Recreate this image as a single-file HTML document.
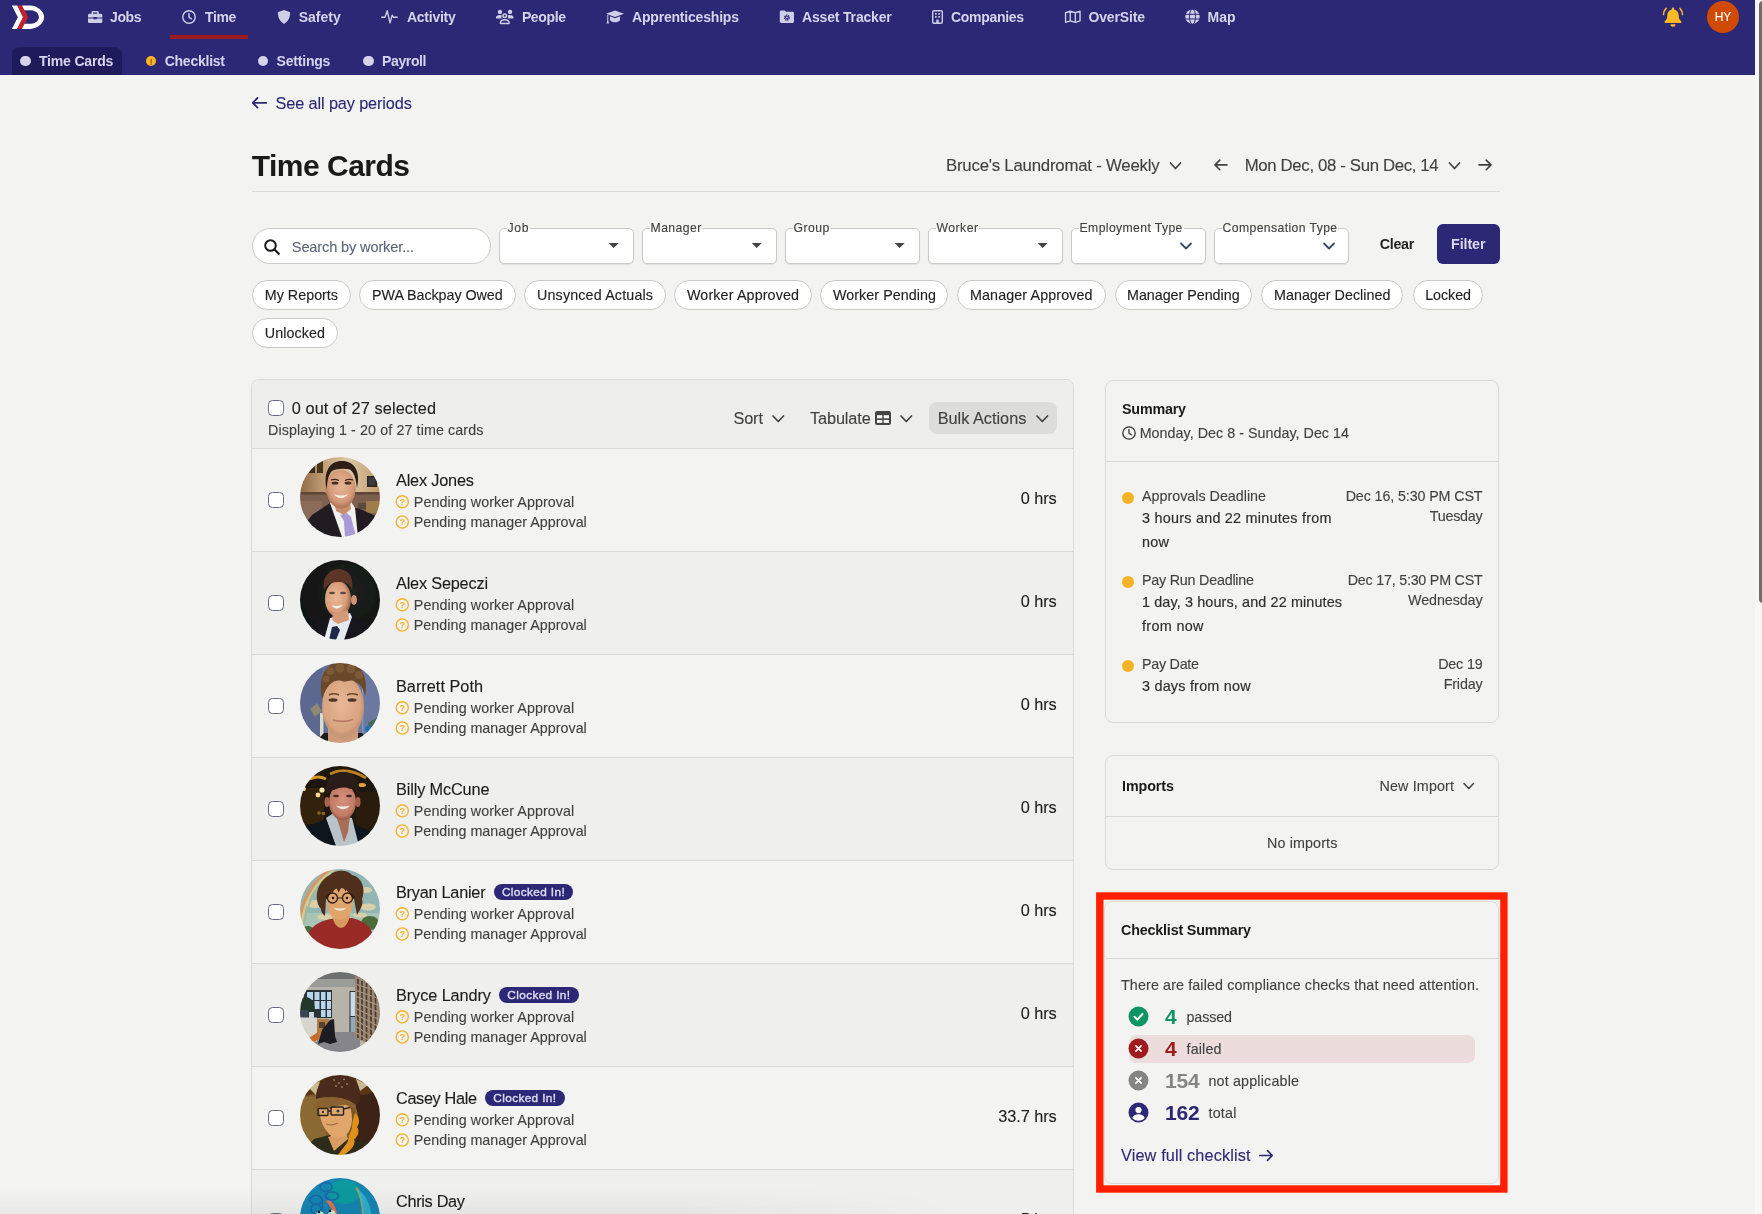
<!DOCTYPE html>
<html lang="en"><head><meta charset="utf-8"><title>Time Cards</title>
<style>
*{box-sizing:border-box;margin:0;padding:0}
html,body{width:1762px;height:1214px;overflow:hidden}
body{background:#f3f3f1;font-family:"Liberation Sans",sans-serif;position:relative;color:#222}
#app{position:absolute;left:0;top:0;width:1762px;height:1214px;overflow:hidden;will-change:transform}
.t{position:absolute;white-space:nowrap;line-height:1.2;display:block;-webkit-text-stroke:.12px currentColor}
.b{-webkit-text-stroke:0}
.abs,svg.i{position:absolute;overflow:visible}
nav.top{position:absolute;left:0;top:0;width:1755px;height:75px;background:#2d2876}
.tabbg{position:absolute;left:12px;top:47px;width:110px;height:28px;background:#1f1b5b;border-radius:7px 7px 0 0}
.dot{position:absolute;width:10.6px;height:10.6px;border-radius:50%;background:#d5d4eb}
.uline{position:absolute;left:170px;top:35px;width:78px;height:4px;background:#9b1c1f}
.sb-track{position:absolute;left:1755px;top:0;width:7px;height:1214px;background:#f7f7f5}
.sb-thumb{position:absolute;left:1759px;top:1px;width:8px;height:602px;background:#6d6d6b;border-radius:4px}
.hr{position:absolute;height:1px;background:#d8d8d6}
.search{position:absolute;left:252px;top:228px;width:239px;height:36px;border:1px solid #c9c9c7;border-radius:18px;background:#fff}
.sel{position:absolute;top:228px;width:135px;height:36px;border:1px solid #c9c9c7;border-radius:5px;background:#fff;box-shadow:0 1px 1px rgba(0,0,0,.08)}
.notch{position:absolute;top:228px;height:1px;background:#f9f9f8}
.chip{position:absolute;height:30px;border:1px solid #c9c9c7;border-radius:15px;background:#fff}
.btn-filter{position:absolute;left:1437px;top:224px;width:63px;height:40px;border-radius:6px;background:#2d2876}
.card{position:absolute;border:1px solid #dadad8;border-radius:8px;background:#f3f3f1;overflow:hidden}
.row{position:absolute;left:0;width:820px;height:103px;border-top:1px solid #d9d9d7}
.cb{position:absolute;width:16px;height:16px;border:1px solid #636a88;border-radius:4.5px;background:#fff}
.av{position:absolute;left:47px;top:9px;width:80px;height:80px;border-radius:50%;overflow:hidden}
.badge{position:absolute;height:16px;border-radius:8px;background:#2d2876}
.bulk{position:absolute;left:929px;top:402px;width:128px;height:32px;border-radius:8px;background:#dcdcda}
.ydot{position:absolute;width:12px;height:12px;border-radius:50%;background:#f9b325}
.failbg{position:absolute;left:1129px;top:1035px;width:346px;height:28px;border-radius:7px;background:#ecdcdb}
.redbox{position:absolute;left:1097px;top:893px;width:411px;height:300px;border:5px solid #fb2007}
.shade{position:absolute;left:0;top:1186px;width:960px;height:28px;background:linear-gradient(rgba(0,0,0,0),rgba(0,0,0,.02) 60%,rgba(0,0,0,.045));-webkit-mask-image:linear-gradient(to right,#000 0,#000 70%,transparent 100%);mask-image:linear-gradient(to right,#000 0,#000 70%,transparent 100%)}
</style></head>
<body>
<div id="app">
<nav class="top">
<svg class="i" style="left:11px;top:5px" width="32.5" height="23.4" viewBox="0 0 32.500 23.400" ><g transform="translate(0.80 0.50)"><path fill="#fff" d="M0 0H5.500L11.300 11.700L5.300 23.400H0L6.100 11.700z"/><path fill="#c52127" d="M5.500 0H10.200L16.400 11.400L10.100 23.400H5.300L11.300 11.700z"/><path fill="#fff" d="M10.200 0H18.500C25.500 .3 32.300 5.600 32.300 11.700C32.300 17.800 25.500 23.100 18.500 23.400H10.100L12.800 18.300H19.300C23.500 18.100 27.100 15.200 27.100 11.500C27.100 7.800 23.500 4.900 19.300 4.700H12.700z"/></g></svg>
<svg class="i" style="left:88px;top:11px" width="14.3" height="12" viewBox="0 0 15 13" preserveAspectRatio="none"><g transform="translate(0.00 0.11)"><path fill="#cfcee8" d="M5 0h5a1.3 1.3 0 0 1 1.3 1.3V3H13.5A1.5 1.5 0 0 1 15 4.5V7H9.2v-.6H5.8V7H0V4.5A1.5 1.5 0 0 1 1.500 3H3.700V1.300A1.300 1.300 0 0 1 5 0zm.3 1.500V3h4.400V1.500zM0 8h5.800v.9h3.400V8H15v3.500A1.500 1.500 0 0 1 13.500 13h-12A1.500 1.500 0 0 1 0 11.500z"/></g></svg>
<span class="t b" style="left:110px;top:8px;line-height:18px;font-size:14px;font-weight:700;color:#d5d4eb;letter-spacing:-0.362px;">Jobs</span>
<svg class="i" style="left:182px;top:10px" width="14" height="14" viewBox="0 0 14 14" ><circle cx="7" cy="7" r="6.2" fill="none" stroke="#cfcee8" stroke-width="1.4"/><path d="M7 3.400V7.200L9.400 8.800" fill="none" stroke="#cfcee8" stroke-width="1.4" stroke-linecap="round" stroke-linejoin="round"/></svg>
<span class="t b" style="left:205px;top:8px;line-height:18px;font-size:14px;font-weight:700;color:#d5d4eb;letter-spacing:-0.346px;">Time</span>
<svg class="i" style="left:277px;top:10px" width="14" height="14" viewBox="0 0 14 14" ><path fill="#cfcee8" d="M7 0L13.200 2.300C13.200 8 10.500 12 7 14C3.500 12 .8 8 .8 2.300z"/></svg>
<span class="t b" style="left:298.7px;top:8px;line-height:18px;font-size:14px;font-weight:700;color:#d5d4eb;letter-spacing:-0.006px;">Safety</span>
<svg class="i" style="left:381px;top:9px" width="17" height="14.5" viewBox="0 0 17 14.500" ><g transform="translate(0.00 0.50)"><path fill="none" stroke="#cfcee8" stroke-width="1.350" stroke-linecap="round" stroke-linejoin="round" d="M.7 7.700H4L6.200 1.200L9 13.300L11.200 5.600L12.300 7.700H16.300"/></g></svg>
<span class="t b" style="left:407px;top:8px;line-height:18px;font-size:14px;font-weight:700;color:#d5d4eb;letter-spacing:-0.268px;">Activity</span>
<svg class="i" style="left:495px;top:9px" width="18.5" height="15" viewBox="0 0 18.500 15" ><g transform="translate(0.50 0.50)"><g fill="#cfcee8"><circle cx="4.470" cy="2.400" r="2.200"/><circle cx="14.530" cy="2.400" r="2.200"/><path d="M.4 8.300C.5 6.300 2.100 5.400 4.200 5.400C5.200 5.400 6 5.700 6.500 6.100C5.900 6.900 5.800 8 6 9H1C.6 9 .4 8.700 .4 8.300z"/><path d="M18.100 8.300C18 6.300 16.400 5.400 14.300 5.400C13.300 5.400 12.500 5.700 12 6.100C12.600 6.900 12.700 8 12.500 9H17.500C17.900 9 18.100 8.700 18.100 8.300z"/></g><circle cx="9.200" cy="6.300" r="1.750" fill="none" stroke="#cfcee8" stroke-width="1.500"/><path d="M4.900 13.400C5 11.200 6.800 10.300 9.250 10.300C11.700 10.300 13.500 11.200 13.600 13.400C13.600 13.700 13.400 13.900 13.100 13.900H5.400C5.100 13.900 4.900 13.700 4.900 13.400z" fill="none" stroke="#cfcee8" stroke-width="1.500" stroke-linejoin="round"/></g></svg>
<span class="t b" style="left:521.9px;top:8px;line-height:18px;font-size:14px;font-weight:700;color:#d5d4eb;letter-spacing:-0.361px;">People</span>
<svg class="i" style="left:606px;top:10px" width="18" height="14" viewBox="0 0 18 14" ><g fill="#cfcee8"><path d="M9 .5L18 3.800L9 7.100L0 3.800z"/><path d="M4 6.300L9 8.200L14 6.300V10.200C12.800 11.600 10.800 12.300 9 12.300S5.200 11.600 4 10.200z"/><path d="M1.300 4.800h1v5.500l.7 3.200H.6l.7-3.200z"/></g></svg>
<span class="t b" style="left:632px;top:8px;line-height:18px;font-size:14px;font-weight:700;color:#d5d4eb;letter-spacing:-0.193px;">Apprenticeships</span>
<svg class="i" style="left:779px;top:10px" width="14.2" height="12.7" viewBox="0 0 15 13" preserveAspectRatio="none"><g transform="translate(0.85 0.41)"><path fill="#cfcee8" d="M1.500 0H5.200L6.700 1.500H13.500A1.500 1.500 0 0 1 15 3V11.500A1.500 1.500 0 0 1 13.500 13H1.500A1.500 1.500 0 0 1 0 11.500V1.500A1.500 1.500 0 0 1 1.500 0z"/><circle cx="7.500" cy="7.400" r="2.300" fill="none" stroke="#2d2876" stroke-width="1.700" stroke-dasharray="1.200 .6"/><circle cx="7.500" cy="7.400" r="1.700" fill="#2d2876"/><circle cx="7.500" cy="7.400" r=".9" fill="#cfcee8"/></g></svg>
<span class="t b" style="left:802px;top:8px;line-height:18px;font-size:14px;font-weight:700;color:#d5d4eb;letter-spacing:-0.170px;">Asset Tracker</span>
<svg class="i" style="left:932px;top:10px" width="11" height="14" viewBox="0 0 11 14" ><rect x=".7" y=".7" width="9.600" height="12.600" rx="1.400" fill="none" stroke="#cfcee8" stroke-width="1.400"/><g fill="#cfcee8"><rect x="3" y="3" width="1.700" height="1.700"/><rect x="6.300" y="3" width="1.700" height="1.700"/><rect x="3" y="6" width="1.700" height="1.700"/><rect x="6.300" y="6" width="1.700" height="1.700"/><rect x="4.300" y="9.600" width="2.400" height="3.400"/></g></svg>
<span class="t b" style="left:951px;top:8px;line-height:18px;font-size:14px;font-weight:700;color:#d5d4eb;letter-spacing:-0.309px;">Companies</span>
<svg class="i" style="left:1064px;top:10px" width="16" height="12.6" viewBox="0 0 17 13" preserveAspectRatio="none"><g transform="translate(0.85 0.52)"><path fill="none" stroke="#cfcee8" stroke-width="1.450" stroke-linejoin="round" d="M.8 2.300L5.800 .8L11.200 2.300L16.200 .8V10.700L11.200 12.200L5.800 10.700L.8 12.200zM5.800 .8V10.700M11.200 2.300V12.200"/></g></svg>
<span class="t b" style="left:1088.5px;top:8px;line-height:18px;font-size:14px;font-weight:700;color:#d5d4eb;letter-spacing:-0.156px;">OverSite</span>
<svg class="i" style="left:1185px;top:9px" width="15" height="15" viewBox="0 0 15 15" ><g transform="translate(0.00 0.20)"><circle cx="7.500" cy="7.500" r="7.200" fill="#cfcee8"/><g fill="none" stroke="#2d2876" stroke-width="1"><ellipse cx="7.500" cy="7.500" rx="3" ry="7.600"/><path d="M0 5.100H15M0 9.800H15"/></g></g></svg>
<span class="t b" style="left:1207.5px;top:8px;line-height:18px;font-size:14px;font-weight:700;color:#d5d4eb;">Map</span>
<div class="uline"></div>
<svg class="i" style="left:1662px;top:7px" width="21" height="21" viewBox="0 0 21 21" ><g transform="translate(0.50 0.00)"><g fill="#fbb924"><path d="M10.500 .6c.7 0 1.200.5 1.200 1.200v.6c2.800.6 4.500 2.900 4.500 5.800 0 3 .9 4.700 2.500 6 .6.500.3 1.700-.7 1.700H3c-1 0-1.300-1.200-.7-1.700C3.900 12.900 4.800 11.200 4.800 8.200c0-2.900 1.700-5.200 4.500-5.800V1.800c0-.7.500-1.200 1.200-1.200z"/><path d="M8 17.200h5a2.500 2.500 0 0 1-5 0z"/></g><g fill="none" stroke="#fbb924" stroke-width="1.500" stroke-linecap="round"><path d="M3.600 1.400C2 3 1.100 5.200 1 7.600"/><path d="M17.400 1.400c1.600 1.600 2.500 3.800 2.600 6.200"/></g></g></svg>
<div class="abs" style="left:1707px;top:1px;width:32px;height:32px;border-radius:50%;background:#d04a02"></div>
<span class="t " style="left:1714.8px;top:9px;line-height:16px;font-size:12px;color:#fff;letter-spacing:-0.272px;">HY</span>
<div class="tabbg"></div>
<div class="dot" style="left:20px;top:55.800px"></div>
<span class="t b" style="left:39px;top:52px;line-height:18px;font-size:14px;font-weight:700;color:#d5d4eb;letter-spacing:-0.178px;">Time Cards</span>
<div class="dot" style="left:145.7px;top:55.800px;background:#f9b325"></div>
<span class="t b" style="left:164.7px;top:52px;line-height:18px;font-size:14px;font-weight:700;color:#d5d4eb;letter-spacing:-0.244px;">Checklist</span>
<div class="dot" style="left:257.9px;top:55.800px"></div>
<span class="t b" style="left:276.5px;top:52px;line-height:18px;font-size:14px;font-weight:700;color:#d5d4eb;letter-spacing:-0.191px;">Settings</span>
<div class="dot" style="left:363px;top:55.800px"></div>
<span class="t b" style="left:382px;top:52px;line-height:18px;font-size:14px;font-weight:700;color:#d5d4eb;letter-spacing:-0.367px;">Payroll</span>
<span class="t b" style="left:149.7px;top:56px;line-height:12px;font-size:8.5px;font-weight:700;color:#8a5a00;">!</span>
</nav>
<div class="sb-track"></div><div class="sb-thumb"></div>
<main>
<svg class="i" style="left:251px;top:96px" width="15.6" height="12" viewBox="0 0 15.6 12" ><g transform="translate(0.70 0.80)"><path d="M14.6 6H1.200M5.800 1.200L1 6L5.800 10.800" fill="none" stroke="#2d2876" stroke-width="1.8" stroke-linecap="round" stroke-linejoin="round"/></g></svg>
<span class="t " style="left:275.6px;top:93px;line-height:20px;font-size:16.3px;color:#2d2876;letter-spacing:-0.127px;">See all pay periods</span>
<span class="t b" style="left:251.7px;top:148px;line-height:35px;font-size:30px;font-weight:700;color:#1a1a1a;letter-spacing:0.071px;letter-spacing:-0.5px;">Time Cards</span>
<span class="t " style="left:946px;top:155px;line-height:21px;font-size:16.8px;color:#414141;letter-spacing:-0.215px;">Bruce's Laundromat - Weekly</span>
<svg class="i" style="left:1169px;top:162px" width="12" height="7.5" viewBox="0 0 12 7.5" ><g transform="translate(0.50 0.00)"><path d="M1 1L6.0 6.5L11 1" fill="none" stroke="#414141" stroke-width="1.7" stroke-linecap="round" stroke-linejoin="round"/></g></svg>
<svg class="i" style="left:1214px;top:158px" width="14" height="12" viewBox="0 0 14 12" ><g transform="translate(0.00 0.90)"><path d="M13 6H1.200M5.800 1.200L1 6L5.800 10.800" fill="none" stroke="#414141" stroke-width="1.6" stroke-linecap="round" stroke-linejoin="round"/></g></svg>
<span class="t " style="left:1244.7px;top:155px;line-height:21px;font-size:16.8px;color:#414141;letter-spacing:-0.351px;">Mon Dec, 08 - Sun Dec, 14</span>
<svg class="i" style="left:1448px;top:162px" width="12" height="7.5" viewBox="0 0 12 7.5" ><g transform="translate(0.50 0.00)"><path d="M1 1L6.0 6.5L11 1" fill="none" stroke="#414141" stroke-width="1.7" stroke-linecap="round" stroke-linejoin="round"/></g></svg>
<svg class="i" style="left:1478px;top:158px" width="14" height="12" viewBox="0 0 14 12" ><g transform="translate(0.00 0.90)"><path d="M1 6H12.8M8.2 1.200L13 6L8.2 10.800" fill="none" stroke="#414141" stroke-width="1.6" stroke-linecap="round" stroke-linejoin="round"/></g></svg>
<div class="hr" style="left:252px;top:191px;width:1248px"></div>
<div class="search"></div>
<svg class="i" style="left:264px;top:239px" width="16" height="16" viewBox="0 0 16 16" ><circle cx="6.500" cy="6.500" r="5.300" fill="none" stroke="#1a1a1a" stroke-width="2"/><path d="M10.500 10.500L14.800 14.800" stroke="#1a1a1a" stroke-width="2.200" stroke-linecap="round"/></svg>
<span class="t " style="left:291.8px;top:238px;line-height:18px;font-size:14.6px;color:#5d6579;letter-spacing:-0.151px;">Search by worker...</span>
<div class="sel" style="left:499.4px"></div>
<div class="notch" style="left:506.59999999999997px;width:23.2px"></div>
<span class="t " style="left:507.59999999999997px;top:220px;line-height:16px;font-size:12.2px;color:#414141;letter-spacing:0.672px;">Job</span>
<svg class="i" style="left:608px;top:243px" width="10" height="5" viewBox="0 0 10 5" ><g transform="translate(0.70 0.00)"><path d="M0 0H10L5 5z" fill="#444"/></g></svg>
<div class="sel" style="left:642.4px"></div>
<div class="notch" style="left:649.6px;width:52.800000000000004px"></div>
<span class="t " style="left:650.6px;top:220px;line-height:16px;font-size:12.2px;color:#414141;letter-spacing:0.415px;">Manager</span>
<svg class="i" style="left:751px;top:243px" width="10" height="5" viewBox="0 0 10 5" ><g transform="translate(0.70 0.00)"><path d="M0 0H10L5 5z" fill="#444"/></g></svg>
<div class="sel" style="left:785.4px"></div>
<div class="notch" style="left:792.6px;width:37.800000000000004px"></div>
<span class="t " style="left:793.6px;top:220px;line-height:16px;font-size:12.2px;color:#414141;letter-spacing:0.431px;">Group</span>
<svg class="i" style="left:894px;top:243px" width="10" height="5" viewBox="0 0 10 5" ><g transform="translate(0.70 0.00)"><path d="M0 0H10L5 5z" fill="#444"/></g></svg>
<div class="sel" style="left:928.4px"></div>
<div class="notch" style="left:935.6px;width:43.6px"></div>
<span class="t " style="left:936.6px;top:220px;line-height:16px;font-size:12.2px;color:#414141;letter-spacing:0.467px;">Worker</span>
<svg class="i" style="left:1037px;top:243px" width="10" height="5" viewBox="0 0 10 5" ><g transform="translate(0.70 0.00)"><path d="M0 0H10L5 5z" fill="#444"/></g></svg>
<div class="sel" style="left:1071.4px"></div>
<div class="notch" style="left:1078.6000000000001px;width:105.0px"></div>
<span class="t " style="left:1079.6000000000001px;top:220px;line-height:16px;font-size:12.2px;color:#414141;letter-spacing:0.391px;">Employment Type</span>
<svg class="i" style="left:1180px;top:242px" width="12" height="7" viewBox="0 0 12 7" ><g transform="translate(0.00 0.50)"><path d="M1 1L6.0 6L11 1" fill="none" stroke="#3a4a63" stroke-width="1.8" stroke-linecap="round" stroke-linejoin="round"/></g></svg>
<div class="sel" style="left:1214.4px"></div>
<div class="notch" style="left:1221.6000000000001px;width:116.7px"></div>
<span class="t " style="left:1222.6000000000001px;top:220px;line-height:16px;font-size:12.2px;color:#414141;letter-spacing:0.395px;">Compensation Type</span>
<svg class="i" style="left:1323px;top:242px" width="12" height="7" viewBox="0 0 12 7" ><g transform="translate(0.00 0.50)"><path d="M1 1L6.0 6L11 1" fill="none" stroke="#3a4a63" stroke-width="1.8" stroke-linecap="round" stroke-linejoin="round"/></g></svg>
<span class="t b" style="left:1379.8px;top:235px;line-height:18px;font-size:14.3px;font-weight:700;color:#222;letter-spacing:-0.316px;">Clear</span>
<div class="btn-filter"></div>
<span class="t b" style="left:1451px;top:235px;line-height:18px;font-size:14.3px;font-weight:700;color:#d9d8ee;letter-spacing:-0.094px;">Filter</span>
<div class="chip" style="left:252px;top:280px;width:99.0px"></div>
<span class="t " style="left:264.8px;top:286px;line-height:18px;font-size:14.3px;color:#222;letter-spacing:0.012px;">My Reports</span>
<div class="chip" style="left:359px;top:280px;width:156.6px"></div>
<span class="t " style="left:372px;top:286px;line-height:18px;font-size:14.3px;color:#222;letter-spacing:-0.052px;">PWA Backpay Owed</span>
<div class="chip" style="left:524px;top:280px;width:141.6px"></div>
<span class="t " style="left:537px;top:286px;line-height:18px;font-size:14.3px;color:#222;letter-spacing:0.156px;">Unsynced Actuals</span>
<div class="chip" style="left:674px;top:280px;width:138.0px"></div>
<span class="t " style="left:687px;top:286px;line-height:18px;font-size:14.3px;color:#222;letter-spacing:0.128px;">Worker Approved</span>
<div class="chip" style="left:820px;top:280px;width:128.3px"></div>
<span class="t " style="left:833px;top:286px;line-height:18px;font-size:14.3px;color:#222;letter-spacing:0.058px;">Worker Pending</span>
<div class="chip" style="left:957.4px;top:280px;width:148.2px"></div>
<span class="t " style="left:970px;top:286px;line-height:18px;font-size:14.3px;color:#222;letter-spacing:0.113px;">Manager Approved</span>
<div class="chip" style="left:1114.7px;top:280px;width:137.6px"></div>
<span class="t " style="left:1127px;top:286px;line-height:18px;font-size:14.3px;color:#222;letter-spacing:-0.020px;">Manager Pending</span>
<div class="chip" style="left:1261.4px;top:280px;width:142.0px"></div>
<span class="t " style="left:1274px;top:286px;line-height:18px;font-size:14.3px;color:#222;letter-spacing:0.025px;">Manager Declined</span>
<div class="chip" style="left:1412.5px;top:280px;width:70.8px"></div>
<span class="t " style="left:1425.2px;top:286px;line-height:18px;font-size:14.3px;color:#222;letter-spacing:-0.062px;">Locked</span>
<div class="chip" style="left:252px;top:318px;width:86px"></div>
<span class="t " style="left:264.8px;top:324px;line-height:18px;font-size:14.3px;color:#222;letter-spacing:0.084px;">Unlocked</span>
<section class="card" style="left:251px;top:379px;width:823px;height:860px;border-radius:8px 8px 0 0">
<div class="abs" style="left:0;top:0;width:821px;height:68px;background:#eeeeec"></div>
</section>
<div class="cb" style="left:268px;top:400px"></div>
<span class="t " style="left:291.7px;top:398px;line-height:20px;font-size:16.3px;color:#222;letter-spacing:0.114px;">0 out of 27 selected</span>
<span class="t " style="left:268px;top:421px;line-height:18px;font-size:14.3px;color:#414141;letter-spacing:0.098px;">Displaying 1 - 20 of 27 time cards</span>
<span class="t " style="left:733.4px;top:408px;line-height:20px;font-size:16.3px;color:#414141;letter-spacing:-0.092px;">Sort</span>
<svg class="i" style="left:772px;top:415px" width="12.5" height="7.5" viewBox="0 0 12.5 7.5" ><path d="M1 1L6.25 6.5L11.5 1" fill="none" stroke="#414141" stroke-width="1.7" stroke-linecap="round" stroke-linejoin="round"/></svg>
<span class="t " style="left:810px;top:408px;line-height:20px;font-size:16.3px;color:#414141;letter-spacing:-0.123px;">Tabulate</span>
<svg class="i" style="left:875px;top:411px" width="16" height="14" viewBox="0 0 16 14" ><rect width="16" height="14" rx="2.200" fill="#444"/><g fill="#fbfbfa"><rect x="2" y="4.200" width="5.300" height="3.100"/><rect x="8.700" y="4.200" width="5.300" height="3.100"/><rect x="2" y="8.900" width="5.300" height="3"/><rect x="8.700" y="8.900" width="5.300" height="3"/></g></svg>
<svg class="i" style="left:900px;top:415px" width="12.5" height="7.5" viewBox="0 0 12.5 7.5" ><path d="M1 1L6.25 6.5L11.5 1" fill="none" stroke="#414141" stroke-width="1.7" stroke-linecap="round" stroke-linejoin="round"/></svg>
<div class="bulk"></div>
<span class="t " style="left:937.7px;top:408px;line-height:20px;font-size:16.3px;color:#414141;letter-spacing:-0.000px;">Bulk Actions</span>
<svg class="i" style="left:1036px;top:415px" width="12.5" height="7.5" viewBox="0 0 12.5 7.5" ><path d="M1 1L6.25 6.5L11.5 1" fill="none" stroke="#414141" stroke-width="1.7" stroke-linecap="round" stroke-linejoin="round"/></svg>
<div class="abs" style="left:252px;top:448px;width:821px;height:103px;background:#f3f3f1;border-top:1px solid #d9d9d7"></div>
<div class="cb" style="left:268px;top:492px"></div>
<div class="av" style="left:300px;top:457px"><svg width="80" height="80" viewBox="0 0 80 80"><defs><filter id="b1" x="-5%" y="-5%" width="110%" height="110%"><feGaussianBlur stdDeviation="0.6"/></filter></defs><g filter="url(#b1)">
<defs><radialGradient id="f1" cx=".5" cy=".42" r=".6"><stop offset="0" stop-color="#e6b597"/><stop offset=".7" stop-color="#d49a78"/><stop offset="1" stop-color="#a8694e"/></radialGradient>
<linearGradient id="w1" x1="0" x2="1"><stop offset="0" stop-color="#8f6a44"/><stop offset=".35" stop-color="#c9a77e"/><stop offset=".6" stop-color="#dcc8a8"/><stop offset="1" stop-color="#c19a6c"/></linearGradient></defs>
<rect width="80" height="80" fill="url(#w1)"/>
<rect x="0" y="35" width="80" height="45" fill="#7d5f4d"/>
<rect x="0" y="35" width="80" height="2.500" fill="#5e4434"/>
<rect x="0" y="44" width="22" height="22" fill="#8a6c58"/>
<rect x="9" y="5" width="6" height="11" fill="#3b2b1e"/><rect x="17" y="4" width="6" height="12" fill="#46321f"/>
<rect x="67" y="19" width="10" height="11" fill="#2b2622"/><rect x="68.500" y="20.500" width="7" height="8" fill="#3a3a40"/>
<rect x="66" y="44" width="14" height="12" fill="#a07c4c"/><rect x="58" y="46" width="8" height="6" fill="#5c4a3c"/>
<path d="M4 68L12 58L30 46L34 52L52 50L60 52L78 60L80 80H0z" fill="#241d24"/>
<path d="M30 46L36 43H50L55 51L58 80H42z" fill="#f3f1ec"/>
<path d="M40 58L47 56L51 60L56 80H45L44 64z" fill="#a999d8"/>
<path d="M34 44H50L51 52L44 58L36 54z" fill="#c98e6e"/>
<ellipse cx="27" cy="33" rx="2" ry="4" fill="#c48868"/>
<ellipse cx="41" cy="32" rx="14.500" ry="19.500" fill="url(#f1)"/>
<path d="M26.500 32C23 14 30 4 42 4C54 4 61 14 57 31C56 22 54 15 50 12.500C44 11 36 11.500 32 14C28 18 27.500 24 26.500 32z" fill="#2d1c16"/>
<ellipse cx="35" cy="26" rx="3.400" ry="1.500" fill="#4a2d22"/><ellipse cx="48" cy="26" rx="3.400" ry="1.500" fill="#4a2d22"/>
<path d="M31 23Q35 21.500 39 23.500M45 23.500Q49 21.500 53 23" stroke="#3a241b" stroke-width="1.200" fill="none"/>
<path d="M33.500 37Q41 40 48.500 37Q41 45 33.500 37z" fill="#f6efe8"/>
</g></svg></div>
<span class="t " style="left:396px;top:470px;line-height:20px;font-size:16.3px;color:#1c1c1c;letter-spacing:-0.184px;">Alex Jones</span>
<svg class="i" style="left:395px;top:494px" width="14" height="14" viewBox="0 0 14 14" ><g transform="translate(0.30 0.80)"><circle cx="7" cy="7" r="6.100" fill="none" stroke="#f5b32a" stroke-width="1.400"/><text x="7" y="10.300" text-anchor="middle" font-family="Liberation Sans,sans-serif" font-size="9.200" font-weight="700" fill="#f5b32a">?</text></g></svg>
<span class="t " style="left:413.8px;top:493px;line-height:18px;font-size:14.3px;color:#414141;letter-spacing:0.066px;">Pending worker Approval</span>
<svg class="i" style="left:395px;top:515px" width="14" height="14" viewBox="0 0 14 14" ><g transform="translate(0.30 0.00)"><circle cx="7" cy="7" r="6.100" fill="none" stroke="#f5b32a" stroke-width="1.400"/><text x="7" y="10.300" text-anchor="middle" font-family="Liberation Sans,sans-serif" font-size="9.200" font-weight="700" fill="#f5b32a">?</text></g></svg>
<span class="t " style="left:413.8px;top:513px;line-height:18px;font-size:14.3px;color:#414141;letter-spacing:0.022px;">Pending manager Approval</span>
<span class="t " style="right:705.4000000000001px;top:488px;line-height:20px;font-size:16.3px;color:#1c1c1c;letter-spacing:-0.051px;">0 hrs</span>
<div class="abs" style="left:252px;top:551px;width:821px;height:103px;background:#efefed;border-top:1px solid #d9d9d7"></div>
<div class="cb" style="left:268px;top:595px"></div>
<div class="av" style="left:300px;top:560px"><svg width="80" height="80" viewBox="0 0 80 80"><defs><filter id="b2" x="-5%" y="-5%" width="110%" height="110%"><feGaussianBlur stdDeviation="0.7"/></filter></defs><g filter="url(#b2)">
<defs><radialGradient id="f2" cx=".42" cy=".45" r=".62"><stop offset="0" stop-color="#ecb897"/><stop offset=".65" stop-color="#d99f7c"/><stop offset="1" stop-color="#9a5f44"/></radialGradient>
<radialGradient id="g2" cx=".6" cy=".4" r=".7"><stop offset="0" stop-color="#1e2220"/><stop offset="1" stop-color="#0f1110"/></radialGradient></defs>
<rect width="80" height="80" fill="url(#g2)"/>
<path d="M0 80L6 68L30 58L52 56L72 68L80 80z" fill="#15171d"/>
<path d="M30 58L50 53L52 57L44 80H24z" fill="#e6eaf3"/>
<path d="M32 67L37 66L40 70L36 80H29z" fill="#1f2a45"/>
<ellipse cx="54" cy="40" rx="3" ry="5" fill="#cf9273"/>
<ellipse cx="38" cy="39" rx="13" ry="18" fill="url(#f2)"/>
<path d="M33 54L48 50L49 60L38 64L32 60z" fill="#d49a78"/>
<path d="M24 30C22 18 28 10 38 9C48 9 54 16 52 30C50 24 46 22 38 22C30 22 27 25 24 30z" fill="#5b3625"/>
<ellipse cx="32" cy="33" rx="3" ry="1.200" fill="#5a4a44"/><ellipse cx="43" cy="33" rx="3" ry="1.200" fill="#5a4a44"/>
<path d="M31 45Q37 47 43 44.500Q37 52 31 45z" fill="#f5efe6"/>
</g></svg></div>
<span class="t " style="left:396px;top:573px;line-height:20px;font-size:16.3px;color:#1c1c1c;letter-spacing:-0.193px;">Alex Sepeczi</span>
<svg class="i" style="left:395px;top:597px" width="14" height="14" viewBox="0 0 14 14" ><g transform="translate(0.30 0.80)"><circle cx="7" cy="7" r="6.100" fill="none" stroke="#f5b32a" stroke-width="1.400"/><text x="7" y="10.300" text-anchor="middle" font-family="Liberation Sans,sans-serif" font-size="9.200" font-weight="700" fill="#f5b32a">?</text></g></svg>
<span class="t " style="left:413.8px;top:596px;line-height:18px;font-size:14.3px;color:#414141;letter-spacing:0.066px;">Pending worker Approval</span>
<svg class="i" style="left:395px;top:618px" width="14" height="14" viewBox="0 0 14 14" ><g transform="translate(0.30 0.00)"><circle cx="7" cy="7" r="6.100" fill="none" stroke="#f5b32a" stroke-width="1.400"/><text x="7" y="10.300" text-anchor="middle" font-family="Liberation Sans,sans-serif" font-size="9.200" font-weight="700" fill="#f5b32a">?</text></g></svg>
<span class="t " style="left:413.8px;top:616px;line-height:18px;font-size:14.3px;color:#414141;letter-spacing:0.022px;">Pending manager Approval</span>
<span class="t " style="right:705.4000000000001px;top:591px;line-height:20px;font-size:16.3px;color:#1c1c1c;letter-spacing:-0.051px;">0 hrs</span>
<div class="abs" style="left:252px;top:654px;width:821px;height:103px;background:#f3f3f1;border-top:1px solid #d9d9d7"></div>
<div class="cb" style="left:268px;top:698px"></div>
<div class="av" style="left:300px;top:663px"><svg width="80" height="80" viewBox="0 0 80 80"><defs><filter id="b3" x="-5%" y="-5%" width="110%" height="110%"><feGaussianBlur stdDeviation="0.7"/></filter></defs><g filter="url(#b3)">
<defs><radialGradient id="f3" cx=".48" cy=".45" r=".62"><stop offset="0" stop-color="#e8b896"/><stop offset=".7" stop-color="#d8a482"/><stop offset="1" stop-color="#b07c5c"/></radialGradient></defs>
<rect width="80" height="80" fill="#63709a"/>
<rect x="50" y="0" width="30" height="80" fill="#6c789f"/>
<rect x="0" y="0" width="22" height="80" fill="#5b6790"/>
<path d="M10 46L17 40L22 48L15 54z" fill="#8c8873"/>
<rect x="20" y="50" width="3.500" height="24" fill="#d9dccf"/>
<rect x="62" y="20" width="1.500" height="50" fill="#8792b0"/>
<path d="M68 60L78 54V66L70 70z" fill="#3f6b5a"/><circle cx="68" cy="66" r="3" fill="#1c74b8"/>
<path d="M14 80L24 70H62L70 80z" fill="#1f1f1d"/>
<path d="M28 62H58V80H28z" fill="#d09b7a"/>
<ellipse cx="43" cy="44" rx="21" ry="31" fill="url(#f3)"/>
<path d="M22 36C17 12 28 -2 43 -2C60 -2 69 12 65 34C64 26 61 21 55 19C51 15 46 20 42 18C34 16 27 21 22 36z" fill="#6a4829"/><g fill="#7d5a36"><circle cx="30" cy="8" r="4"/><circle cx="40" cy="5" r="4.500"/><circle cx="51" cy="6" r="4.500"/><circle cx="59" cy="12" r="4"/><circle cx="26" cy="16" r="3.500"/></g>
<ellipse cx="33" cy="37" rx="4.500" ry="1.800" fill="#4c3428"/><ellipse cx="52" cy="37" rx="4.500" ry="1.800" fill="#4c3428"/>
<path d="M29 32Q34 29.500 39 32" stroke="#6a4829" stroke-width="1.600" fill="none"/><path d="M47 32Q52 29.500 58 32" stroke="#6a4829" stroke-width="1.600" fill="none"/>
<path d="M33 57Q43 60 53 56.500" stroke="#b87868" stroke-width="1.600" fill="none"/>
<path d="M26 58Q43 84 60 58Q58 76 43 77Q28 76 26 58z" fill="#c99878" opacity=".7"/>
</g></svg></div>
<span class="t " style="left:396px;top:676px;line-height:20px;font-size:16.3px;color:#1c1c1c;letter-spacing:0.010px;">Barrett Poth</span>
<svg class="i" style="left:395px;top:700px" width="14" height="14" viewBox="0 0 14 14" ><g transform="translate(0.30 0.80)"><circle cx="7" cy="7" r="6.100" fill="none" stroke="#f5b32a" stroke-width="1.400"/><text x="7" y="10.300" text-anchor="middle" font-family="Liberation Sans,sans-serif" font-size="9.200" font-weight="700" fill="#f5b32a">?</text></g></svg>
<span class="t " style="left:413.8px;top:699px;line-height:18px;font-size:14.3px;color:#414141;letter-spacing:0.066px;">Pending worker Approval</span>
<svg class="i" style="left:395px;top:721px" width="14" height="14" viewBox="0 0 14 14" ><g transform="translate(0.30 0.00)"><circle cx="7" cy="7" r="6.100" fill="none" stroke="#f5b32a" stroke-width="1.400"/><text x="7" y="10.300" text-anchor="middle" font-family="Liberation Sans,sans-serif" font-size="9.200" font-weight="700" fill="#f5b32a">?</text></g></svg>
<span class="t " style="left:413.8px;top:719px;line-height:18px;font-size:14.3px;color:#414141;letter-spacing:0.022px;">Pending manager Approval</span>
<span class="t " style="right:705.4000000000001px;top:694px;line-height:20px;font-size:16.3px;color:#1c1c1c;letter-spacing:-0.051px;">0 hrs</span>
<div class="abs" style="left:252px;top:757px;width:821px;height:103px;background:#efefed;border-top:1px solid #d9d9d7"></div>
<div class="cb" style="left:268px;top:801px"></div>
<div class="av" style="left:300px;top:766px"><svg width="80" height="80" viewBox="0 0 80 80"><defs><filter id="b4" x="-5%" y="-5%" width="110%" height="110%"><feGaussianBlur stdDeviation="0.7"/></filter></defs><g filter="url(#b4)">
<defs><radialGradient id="f4" cx=".5" cy=".45" r=".62"><stop offset="0" stop-color="#d8917c"/><stop offset=".7" stop-color="#c27c68"/><stop offset="1" stop-color="#7c4436"/></radialGradient></defs>
<rect width="80" height="80" fill="#1d140c"/>
<rect x="0" y="22" width="24" height="36" fill="#33240f"/>
<rect x="56" y="26" width="24" height="44" fill="#2a1a0c"/>
<path d="M10 13Q18 9 26 13" stroke="#d9962a" stroke-width="3" fill="none"/>
<path d="M30 8Q46 0 66 12" stroke="#b97f22" stroke-width="3" fill="none"/>
<ellipse cx="62" cy="19" rx="4" ry="2" fill="#e0a030"/>
<circle cx="22" cy="24" r="2.600" fill="#ffe6b0"/><circle cx="18" cy="29" r="2.400" fill="#ffd890"/><circle cx="4" cy="23" r="2" fill="#f2d9a0"/>
<circle cx="19" cy="47" r="1.800" fill="#8a6420"/><circle cx="23.500" cy="47.500" r="1.800" fill="#8a6420"/>
<path d="M4 62L28 52L36 80H14z" fill="#10121c"/>
<path d="M54 58L72 66L62 80H54z" fill="#11131b"/>
<path d="M26 52L32 48L52 52L58 76L50 80H36z" fill="#b9c4c8"/>
<path d="M36 50H50L48 66L44 76L40 62z" fill="#a96c58"/>
<ellipse cx="58" cy="36" rx="2.500" ry="5" fill="#a8624e"/><ellipse cx="27" cy="36" rx="2.500" ry="5" fill="#a8624e"/>
<ellipse cx="42.500" cy="36" rx="13.500" ry="18" fill="url(#f4)"/>
<path d="M27 30C24 16 30 6 43 6C56 6 62 16 58 30C56 24 54 22 50 23C44 20 38 22 34 24C30 24 28 26 27 30z" fill="#2a1d16"/>
<ellipse cx="36" cy="30" rx="3" ry="1.200" fill="#4a2a22"/><ellipse cx="49" cy="30" rx="3" ry="1.200" fill="#4a2a22"/>
<path d="M36 39.500Q43 41.500 50 39.500Q43 47 36 39.500z" fill="#f3ebe2"/>
</g></svg></div>
<span class="t " style="left:396px;top:779px;line-height:20px;font-size:16.3px;color:#1c1c1c;letter-spacing:-0.138px;">Billy McCune</span>
<svg class="i" style="left:395px;top:803px" width="14" height="14" viewBox="0 0 14 14" ><g transform="translate(0.30 0.80)"><circle cx="7" cy="7" r="6.100" fill="none" stroke="#f5b32a" stroke-width="1.400"/><text x="7" y="10.300" text-anchor="middle" font-family="Liberation Sans,sans-serif" font-size="9.200" font-weight="700" fill="#f5b32a">?</text></g></svg>
<span class="t " style="left:413.8px;top:802px;line-height:18px;font-size:14.3px;color:#414141;letter-spacing:0.066px;">Pending worker Approval</span>
<svg class="i" style="left:395px;top:824px" width="14" height="14" viewBox="0 0 14 14" ><g transform="translate(0.30 0.00)"><circle cx="7" cy="7" r="6.100" fill="none" stroke="#f5b32a" stroke-width="1.400"/><text x="7" y="10.300" text-anchor="middle" font-family="Liberation Sans,sans-serif" font-size="9.200" font-weight="700" fill="#f5b32a">?</text></g></svg>
<span class="t " style="left:413.8px;top:822px;line-height:18px;font-size:14.3px;color:#414141;letter-spacing:0.022px;">Pending manager Approval</span>
<span class="t " style="right:705.4000000000001px;top:797px;line-height:20px;font-size:16.3px;color:#1c1c1c;letter-spacing:-0.051px;">0 hrs</span>
<div class="abs" style="left:252px;top:860px;width:821px;height:103px;background:#f3f3f1;border-top:1px solid #d9d9d7"></div>
<div class="cb" style="left:268px;top:904px"></div>
<div class="av" style="left:300px;top:869px"><svg width="80" height="80" viewBox="0 0 80 80"><defs><filter id="b5" x="-5%" y="-5%" width="110%" height="110%"><feGaussianBlur stdDeviation="0.45"/></filter></defs><g filter="url(#b5)">
<rect width="80" height="80" fill="#93b6b4"/>
<rect x="0" y="44" width="80" height="20" fill="#a8c4b4"/>
<g fill="#d9d0aa"><ellipse cx="15" cy="35" rx="9" ry="4"/><ellipse cx="66" cy="21" rx="6" ry="3"/><ellipse cx="68" cy="38" rx="8" ry="3.500"/><ellipse cx="25" cy="48" rx="8" ry="3"/><ellipse cx="60" cy="46" rx="7" ry="2.500"/></g>
<path d="M-1 58Q1 20 31 -1" stroke="#e0935a" stroke-width="2.200" fill="none"/>
<path d="M1.500 58Q3.500 22 33.500 1" stroke="#e3c77c" stroke-width="1.800" fill="none"/>
<path d="M4 58Q6 24 36 3" stroke="#a4b99a" stroke-width="1.800" fill="none"/>
<ellipse cx="70" cy="54" rx="9" ry="7" fill="#4d6b3a"/><ellipse cx="8" cy="61" rx="5" ry="4" fill="#4d6b3a"/>
<path d="M8 66Q12 54 30 50L52 49Q70 54 72 64L66 80H14z" fill="#9a2927"/>
<path d="M32 46H50Q48 58 41 59Q34 58 32 46z" fill="#d99a60"/>
<path d="M21 40C13 30 17 12 30 6C36 0 48 1 52 6C62 8 66 20 62 30C64 36 59 42 57 46L54 30H26L25 47C22 45 21 42 21 40z" fill="#4f2e1c"/>
<ellipse cx="40" cy="35" rx="12.800" ry="16" fill="#e0a56c"/>
<path d="M26.500 31C26 20 32 14 40 14C48 14 54 20 53.500 29C52 24 50 20 47.500 17.500L45.500 22.500L42.500 16.500L38.500 23.500L36 17.500L32.500 24L31 19.500C29 22 27.500 26 26.500 31z" fill="#4f2e1c"/>
<circle cx="32.500" cy="29" r="5" fill="none" stroke="#2a1c18" stroke-width="1.300"/><circle cx="47.500" cy="29" r="5" fill="none" stroke="#2a1c18" stroke-width="1.300"/>
<path d="M37.500 29H42.500M27.500 28.500L25 27.500M52.500 28.500L55 27.500" stroke="#2a1c18" stroke-width="1.200"/>
<circle cx="33" cy="29" r="1.300" fill="#1a1210"/><circle cx="47" cy="29" r="1.300" fill="#1a1210"/>
<path d="M33 38.500Q40 40.500 47 38.500Q40 45 33 38.500z" fill="#f1eadc"/>
</g></svg></div>
<span class="t " style="left:396px;top:882px;line-height:20px;font-size:16.3px;color:#1c1c1c;letter-spacing:-0.248px;">Bryan Lanier</span>
<div class="badge" style="left:493.6px;top:884px;width:79.500px"></div>
<span class="t " style="left:501.90000000000003px;top:884px;line-height:16px;font-size:11.8px;color:#dddcf0;letter-spacing:0.378px;-webkit-text-stroke:.4px #dddcf0;">Clocked In!</span>
<svg class="i" style="left:395px;top:906px" width="14" height="14" viewBox="0 0 14 14" ><g transform="translate(0.30 0.80)"><circle cx="7" cy="7" r="6.100" fill="none" stroke="#f5b32a" stroke-width="1.400"/><text x="7" y="10.300" text-anchor="middle" font-family="Liberation Sans,sans-serif" font-size="9.200" font-weight="700" fill="#f5b32a">?</text></g></svg>
<span class="t " style="left:413.8px;top:905px;line-height:18px;font-size:14.3px;color:#414141;letter-spacing:0.066px;">Pending worker Approval</span>
<svg class="i" style="left:395px;top:927px" width="14" height="14" viewBox="0 0 14 14" ><g transform="translate(0.30 0.00)"><circle cx="7" cy="7" r="6.100" fill="none" stroke="#f5b32a" stroke-width="1.400"/><text x="7" y="10.300" text-anchor="middle" font-family="Liberation Sans,sans-serif" font-size="9.200" font-weight="700" fill="#f5b32a">?</text></g></svg>
<span class="t " style="left:413.8px;top:925px;line-height:18px;font-size:14.3px;color:#414141;letter-spacing:0.022px;">Pending manager Approval</span>
<span class="t " style="right:705.4000000000001px;top:900px;line-height:20px;font-size:16.3px;color:#1c1c1c;letter-spacing:-0.051px;">0 hrs</span>
<div class="abs" style="left:252px;top:963px;width:821px;height:103px;background:#efefed;border-top:1px solid #d9d9d7"></div>
<div class="cb" style="left:268px;top:1007px"></div>
<div class="av" style="left:300px;top:972px"><svg width="80" height="80" viewBox="0 0 80 80"><defs><filter id="b6" x="-5%" y="-5%" width="110%" height="110%"><feGaussianBlur stdDeviation="0.55"/></filter></defs><g filter="url(#b6)">
<rect width="80" height="80" fill="#b7b3a9"/>
<rect x="0" y="0" width="60" height="7" fill="#6e7070"/><rect x="0" y="7" width="60" height="8" fill="#9a9c9a"/>
<rect x="4" y="18" width="28" height="28" fill="#2b3038"/>
<g fill="#b9d5e9"><rect x="7" y="20" width="6" height="8"/><rect x="14.500" y="20" width="5" height="8"/><rect x="21" y="20" width="4.500" height="8"/><rect x="27" y="20" width="4" height="8"/>
<rect x="14.500" y="29" width="5" height="8"/><rect x="21" y="29" width="4.500" height="8"/><rect x="27" y="29" width="4" height="8"/><rect x="21" y="38" width="4.500" height="7"/><rect x="27" y="38" width="4" height="7"/></g>
<path d="M0 28Q6 22 12 28Q16 34 14 42L0 46z" fill="#24392c"/><rect x="0" y="38" width="8" height="8" fill="#3a4456"/><rect x="9" y="40" width="5" height="6" fill="#c9d2de"/>
<rect x="49.500" y="19" width="6" height="42" fill="#2b3038"/><rect x="50.500" y="20" width="4.500" height="24" fill="#c4dcec"/><rect x="50.500" y="45" width="4.500" height="15" fill="#8fa9bd"/>
<rect x="0" y="60" width="60" height="20" fill="#85858b"/>
<rect x="0" y="45.500" width="17" height="24" fill="#d7d5cf"/>
<rect x="17" y="47" width="12" height="16" fill="#b27d44"/><rect x="19" y="50" width="6" height="6" fill="#5a4030"/>
<path d="M9 66L18 60L20 66L13 71z" fill="#c86a2a"/>
<path d="M22 58L30 48L34 47L35 64L37 70L30 72L24 70L18 72z" fill="#1d1d21"/>
<path d="M55 4L80 12V76L55 66z" fill="#9a846e"/>
<g stroke="#4b3d35" stroke-width="1.700"><path d="M58 7V66M62 9V68M66.500 11V70M71 13V72M75.500 15V74"/></g>
<g stroke="#a8937e" stroke-width="1.200"><path d="M55 12L80 20M55 18L80 27M55 24L80 34M55 30L80 41M55 36L80 48M55 42L80 55M55 48L80 62M55 54L80 69M55 60L80 75"/></g>
</g></svg></div>
<span class="t " style="left:396px;top:985px;line-height:20px;font-size:16.3px;color:#1c1c1c;letter-spacing:-0.085px;">Bryce Landry</span>
<div class="badge" style="left:499.0px;top:987px;width:79.500px"></div>
<span class="t " style="left:507.3px;top:987px;line-height:16px;font-size:11.8px;color:#dddcf0;letter-spacing:0.378px;-webkit-text-stroke:.4px #dddcf0;">Clocked In!</span>
<svg class="i" style="left:395px;top:1009px" width="14" height="14" viewBox="0 0 14 14" ><g transform="translate(0.30 0.80)"><circle cx="7" cy="7" r="6.100" fill="none" stroke="#f5b32a" stroke-width="1.400"/><text x="7" y="10.300" text-anchor="middle" font-family="Liberation Sans,sans-serif" font-size="9.200" font-weight="700" fill="#f5b32a">?</text></g></svg>
<span class="t " style="left:413.8px;top:1008px;line-height:18px;font-size:14.3px;color:#414141;letter-spacing:0.066px;">Pending worker Approval</span>
<svg class="i" style="left:395px;top:1030px" width="14" height="14" viewBox="0 0 14 14" ><g transform="translate(0.30 0.00)"><circle cx="7" cy="7" r="6.100" fill="none" stroke="#f5b32a" stroke-width="1.400"/><text x="7" y="10.300" text-anchor="middle" font-family="Liberation Sans,sans-serif" font-size="9.200" font-weight="700" fill="#f5b32a">?</text></g></svg>
<span class="t " style="left:413.8px;top:1028px;line-height:18px;font-size:14.3px;color:#414141;letter-spacing:0.022px;">Pending manager Approval</span>
<span class="t " style="right:705.4000000000001px;top:1003px;line-height:20px;font-size:16.3px;color:#1c1c1c;letter-spacing:-0.051px;">0 hrs</span>
<div class="abs" style="left:252px;top:1066px;width:821px;height:103px;background:#f3f3f1;border-top:1px solid #d9d9d7"></div>
<div class="cb" style="left:268px;top:1110px"></div>
<div class="av" style="left:300px;top:1075px"><svg width="80" height="80" viewBox="0 0 80 80"><defs><filter id="b7" x="-5%" y="-5%" width="110%" height="110%"><feGaussianBlur stdDeviation="0.45"/></filter></defs><g filter="url(#b7)">
<rect width="80" height="80" fill="#7c5c2a"/>
<rect x="0" y="22" width="26" height="44" fill="#8a6a32"/>
<rect x="56" y="16" width="24" height="64" fill="#3e2412"/>
<path d="M0 22L30 16L64 20L80 16V0H0z" fill="#5a3418"/>
<path d="M8 12L20 6L16 20z" fill="#c9b990"/><path d="M56 4L68 10L60 16z" fill="#c9b990"/>
<path d="M16 24C16 8 26 0 40 0C54 0 60 8 60 22C60 28 58 30 56 30C46 22 30 20 16 24z" fill="#4a2a1a"/>
<g fill="#d8c8a0"><circle cx="34" cy="5" r=".700"/><circle cx="39" cy="8" r=".700"/><circle cx="44" cy="4.500" r=".700"/><circle cx="42" cy="12" r=".700"/><circle cx="47" cy="9" r=".700"/><circle cx="36" cy="11" r=".700"/></g>
<path d="M0 80L14 64L30 60L50 62L66 68L72 80z" fill="#2e2a1a"/>
<path d="M28 62L46 56L48 64L34 76z" fill="#d99c62"/>
<path d="M14 30C20 22 36 20 50 26C58 30 60 44 56 56C54 50 54 44 50 40L20 36C18 38 16 36 14 30z" fill="#8a6230"/>
<path d="M19 34C24 26 40 26 50 32C54 40 52 52 48 58C42 64 34 64 30 60C24 54 20 46 19 34z" fill="#e1a76a"/>
<path d="M16 32C24 24 38 24 50 30C44 30 36 30 30 34C26 32 20 34 16 32z" fill="#8a6230"/>
<path d="M50 30C56 34 58 44 56 52L52 50C52 42 52 36 50 30z" fill="#7a5428"/>
<rect x="18" y="33.500" width="10" height="7" rx="1" fill="none" stroke="#2a2420" stroke-width="1.400"/><rect x="31" y="32" width="12.500" height="8" rx="1" fill="none" stroke="#2a2420" stroke-width="1.500"/>
<path d="M28 36H31M43.500 34L50 32.500" stroke="#2a2420" stroke-width="1.300"/>
<circle cx="38" cy="36" r="1.500" fill="#2a3a5a"/><circle cx="23" cy="37" r="1.200" fill="#2a3a5a"/>
<path d="M26 49Q32 51 38 48" stroke="#a86a48" stroke-width="1.200" fill="none"/>
<path d="M55 38C60 42 60 48 57 52C60 56 58 62 54 64C56 68 52 74 49 76L44 80H38C42 74 46 70 48 66C48 60 52 56 52 52C52 46 54 42 55 38z" fill="#e0911c"/>
</g></svg></div>
<span class="t " style="left:396px;top:1088px;line-height:20px;font-size:16.3px;color:#1c1c1c;letter-spacing:-0.352px;">Casey Hale</span>
<div class="badge" style="left:485.0px;top:1090px;width:79.500px"></div>
<span class="t " style="left:493.3px;top:1090px;line-height:16px;font-size:11.8px;color:#dddcf0;letter-spacing:0.378px;-webkit-text-stroke:.4px #dddcf0;">Clocked In!</span>
<svg class="i" style="left:395px;top:1112px" width="14" height="14" viewBox="0 0 14 14" ><g transform="translate(0.30 0.80)"><circle cx="7" cy="7" r="6.100" fill="none" stroke="#f5b32a" stroke-width="1.400"/><text x="7" y="10.300" text-anchor="middle" font-family="Liberation Sans,sans-serif" font-size="9.200" font-weight="700" fill="#f5b32a">?</text></g></svg>
<span class="t " style="left:413.8px;top:1111px;line-height:18px;font-size:14.3px;color:#414141;letter-spacing:0.066px;">Pending worker Approval</span>
<svg class="i" style="left:395px;top:1133px" width="14" height="14" viewBox="0 0 14 14" ><g transform="translate(0.30 0.00)"><circle cx="7" cy="7" r="6.100" fill="none" stroke="#f5b32a" stroke-width="1.400"/><text x="7" y="10.300" text-anchor="middle" font-family="Liberation Sans,sans-serif" font-size="9.200" font-weight="700" fill="#f5b32a">?</text></g></svg>
<span class="t " style="left:413.8px;top:1131px;line-height:18px;font-size:14.3px;color:#414141;letter-spacing:0.022px;">Pending manager Approval</span>
<span class="t " style="right:705.4000000000001px;top:1106px;line-height:20px;font-size:16.3px;color:#1c1c1c;letter-spacing:-0.049px;">33.7 hrs</span>
<div class="abs" style="left:252px;top:1169px;width:821px;height:103px;background:#efefed;border-top:1px solid #d9d9d7"></div>
<div class="cb" style="left:268px;top:1213px"></div>
<div class="av" style="left:300px;top:1178px"><svg width="80" height="80" viewBox="0 0 80 80"><defs><filter id="b8" x="-5%" y="-5%" width="110%" height="110%"><feGaussianBlur stdDeviation="0.4"/></filter></defs><g filter="url(#b8)">
<rect width="80" height="80" fill="#1585b2"/>
<ellipse cx="44" cy="14" rx="16" ry="12" fill="#119a9c"/>
<g fill="none" stroke="#1668a8" stroke-width="1.600"><ellipse cx="26" cy="9" rx="6" ry="4.500"/><ellipse cx="32" cy="18" rx="6.500" ry="4"/><ellipse cx="16" cy="22" rx="6" ry="4.500"/><ellipse cx="16" cy="31" rx="5" ry="5"/><path d="M22 20L23 40"/></g>
<path d="M26 23C30 20 36 26 38 40H34C33 32 30 28 26 23z" fill="#e0714b"/>
<ellipse cx="20" cy="39" rx="4.500" ry="6" fill="#c9ece0"/><ellipse cx="32" cy="38" rx="4" ry="6" fill="#c9ece0"/>
<circle cx="19" cy="34" r="1.300" fill="#141418"/><circle cx="30" cy="33" r="1.300" fill="#141418"/>
<rect x="28" y="38" width="18" height="8" fill="#d8d020"/>
<path d="M56 10C60 14 63 26 63 38" stroke="#c8962a" stroke-width="2.200" fill="none"/>
<path d="M56 10C64 14 72 26 72 44H63C63 30 60 16 56 10z" fill="#35b9d6" opacity=".75"/>
<rect x="61" y="36" width="4" height="10" fill="#d0c020"/>
</g></svg></div>
<span class="t " style="left:396px;top:1191px;line-height:20px;font-size:16.3px;color:#1c1c1c;letter-spacing:-0.311px;">Chris Day</span>
<svg class="i" style="left:395px;top:1215px" width="14" height="14" viewBox="0 0 14 14" ><g transform="translate(0.30 0.80)"><circle cx="7" cy="7" r="6.100" fill="none" stroke="#f5b32a" stroke-width="1.400"/><text x="7" y="10.300" text-anchor="middle" font-family="Liberation Sans,sans-serif" font-size="9.200" font-weight="700" fill="#f5b32a">?</text></g></svg>
<span class="t " style="left:413.8px;top:1214px;line-height:18px;font-size:14.3px;color:#414141;letter-spacing:0.066px;">Pending worker Approval</span>
<svg class="i" style="left:395px;top:1236px" width="14" height="14" viewBox="0 0 14 14" ><g transform="translate(0.30 0.00)"><circle cx="7" cy="7" r="6.100" fill="none" stroke="#f5b32a" stroke-width="1.400"/><text x="7" y="10.300" text-anchor="middle" font-family="Liberation Sans,sans-serif" font-size="9.200" font-weight="700" fill="#f5b32a">?</text></g></svg>
<span class="t " style="left:413.8px;top:1234px;line-height:18px;font-size:14.3px;color:#414141;letter-spacing:0.022px;">Pending manager Approval</span>
<span class="t " style="right:705.4000000000001px;top:1209px;line-height:20px;font-size:16.3px;color:#1c1c1c;letter-spacing:-0.051px;">5 hrs</span>
<section class="card" style="left:1105px;top:380px;width:394px;height:343px"></section>
<div class="hr" style="left:1106px;top:461px;width:392px"></div>
<span class="t b" style="left:1122px;top:400px;line-height:18px;font-size:14.3px;font-weight:700;color:#1a1a1a;letter-spacing:-0.195px;">Summary</span>
<svg class="i" style="left:1122px;top:426px" width="14" height="14" viewBox="0 0 14 14" ><circle cx="7" cy="7" r="6.2" fill="none" stroke="#333" stroke-width="1.3"/><path d="M7 3.400V7.200L9.400 8.800" fill="none" stroke="#333" stroke-width="1.3" stroke-linecap="round" stroke-linejoin="round"/></svg>
<span class="t " style="left:1139.7px;top:424px;line-height:18px;font-size:14.3px;color:#414141;letter-spacing:0.028px;">Monday, Dec 8 - Sunday, Dec 14</span>
<div class="ydot" style="left:1122px;top:492px"></div>
<span class="t " style="left:1142px;top:487px;line-height:18px;font-size:14.3px;color:#414141;letter-spacing:0.001px;">Approvals Deadline</span>
<span class="t " style="left:1142px;top:509px;line-height:18px;font-size:14.4px;color:#2e2e2e;letter-spacing:0.239px;-webkit-text-stroke:.18px #2e2e2e;">3 hours and 22 minutes from</span>
<span class="t " style="left:1142px;top:533px;line-height:18px;font-size:14.4px;color:#2e2e2e;letter-spacing:0.297px;-webkit-text-stroke:.18px #2e2e2e;">now</span>
<span class="t " style="right:279.5px;top:487px;line-height:18px;font-size:14.3px;color:#414141;letter-spacing:-0.115px;">Dec 16, 5:30 PM CST</span>
<span class="t " style="right:279.5px;top:507px;line-height:18px;font-size:14.3px;color:#414141;letter-spacing:-0.219px;">Tuesday</span>
<div class="ydot" style="left:1122px;top:576px"></div>
<span class="t " style="left:1142px;top:571px;line-height:18px;font-size:14.3px;color:#414141;letter-spacing:-0.217px;">Pay Run Deadline</span>
<span class="t " style="left:1142px;top:593px;line-height:18px;font-size:14.4px;color:#2e2e2e;letter-spacing:0.120px;-webkit-text-stroke:.18px #2e2e2e;">1 day, 3 hours, and 22 minutes</span>
<span class="t " style="left:1142px;top:617px;line-height:18px;font-size:14.4px;color:#2e2e2e;letter-spacing:0.330px;-webkit-text-stroke:.18px #2e2e2e;">from now</span>
<span class="t " style="right:279.5px;top:571px;line-height:18px;font-size:14.3px;color:#414141;letter-spacing:-0.226px;">Dec 17, 5:30 PM CST</span>
<span class="t " style="right:279.5px;top:591px;line-height:18px;font-size:14.3px;color:#414141;letter-spacing:-0.094px;">Wednesday</span>
<div class="ydot" style="left:1122px;top:660px"></div>
<span class="t " style="left:1142px;top:655px;line-height:18px;font-size:14.3px;color:#414141;letter-spacing:-0.259px;">Pay Date</span>
<span class="t " style="left:1142px;top:677px;line-height:18px;font-size:14.4px;color:#2e2e2e;letter-spacing:0.216px;-webkit-text-stroke:.18px #2e2e2e;">3 days from now</span>
<span class="t " style="right:279.5px;top:655px;line-height:18px;font-size:14.3px;color:#414141;letter-spacing:-0.163px;">Dec 19</span>
<span class="t " style="right:279.5px;top:675px;line-height:18px;font-size:14.3px;color:#414141;letter-spacing:-0.147px;">Friday</span>
<section class="card" style="left:1105px;top:755px;width:394px;height:115px"></section>
<div class="hr" style="left:1106px;top:816px;width:392px"></div>
<span class="t b" style="left:1122px;top:777px;line-height:18px;font-size:14.3px;font-weight:700;color:#1a1a1a;letter-spacing:-0.073px;">Imports</span>
<span class="t " style="left:1379.5px;top:777px;line-height:18px;font-size:14.3px;color:#414141;letter-spacing:0.156px;">New Import</span>
<svg class="i" style="left:1463px;top:782px" width="11.5" height="7" viewBox="0 0 11.5 7" ><g transform="translate(0.00 0.50)"><path d="M1 1L5.75 6L10.5 1" fill="none" stroke="#414141" stroke-width="1.5" stroke-linecap="round" stroke-linejoin="round"/></g></svg>
<span class="t " style="left:1267px;top:834px;line-height:18px;font-size:14.3px;color:#414141;letter-spacing:0.131px;">No imports</span>
<svg class="i" style="left:1090px;top:886px" width="424" height="314" viewBox="0 0 424 314"><rect x="9.800" y="10" width="404.100" height="293" fill="none" stroke="#ff2000" stroke-width="7.400"/></svg>
<section class="card" style="left:1104px;top:901px;width:395px;height:283px"></section>
<div class="hr" style="left:1105.500px;top:958px;width:393px"></div>
<span class="t b" style="left:1121px;top:921px;line-height:18px;font-size:14.3px;font-weight:700;color:#1a1a1a;letter-spacing:-0.169px;">Checklist Summary</span>
<span class="t " style="left:1121px;top:976px;line-height:18px;font-size:14.3px;color:#414141;letter-spacing:0.124px;">There are failed compliance checks that need attention.</span>
<div class="failbg"></div>
<svg class="i" style="left:1128px;top:1006px" width="20" height="20" viewBox="0 0 20 20" ><g transform="translate(0.50 0.50)"><circle cx="10" cy="10" r="10" fill="#0e9563"/><path d="M6 10.300L8.800 13L14 7.500" fill="none" stroke="#fff" stroke-width="2" stroke-linecap="round" stroke-linejoin="round"/></g></svg>
<svg class="i" style="left:1128px;top:1038px" width="20" height="20" viewBox="0 0 20 20" ><g transform="translate(0.50 0.50)"><circle cx="10" cy="10" r="10" fill="#9e1b20"/><path d="M7.400 7.400L12.600 12.600M12.600 7.400L7.400 12.600" stroke="#fff" stroke-width="1.700" stroke-linecap="round"/></g></svg>
<svg class="i" style="left:1128px;top:1070px" width="20" height="20" viewBox="0 0 20 20" ><g transform="translate(0.50 0.50)"><circle cx="10" cy="10" r="10" fill="#858583"/><path d="M7.400 7.400L12.600 12.600M12.600 7.400L7.400 12.600" stroke="#fff" stroke-width="1.700" stroke-linecap="round"/></g></svg>
<svg class="i" style="left:1128px;top:1102px" width="20" height="20" viewBox="0 0 20 20" ><g transform="translate(0.50 0.50)"><circle cx="10" cy="10" r="10" fill="#2d2876"/><circle cx="10" cy="7.600" r="3.100" fill="#fff"/><path d="M3.800 15.600C4.600 12.800 7 11.700 10 11.700s5.400 1.100 6.200 3.900C14.700 17.300 12.500 18.300 10 18.300S5.300 17.300 3.800 15.600z" fill="#fff"/></g></svg>
<span class="t b" style="left:1165px;top:1004px;line-height:25px;font-size:21px;font-weight:700;color:#0e9563;">4</span>
<span class="t " style="left:1186.5px;top:1008px;line-height:18px;font-size:14.3px;color:#414141;letter-spacing:-0.122px;">passed</span>
<span class="t b" style="left:1165px;top:1036px;line-height:25px;font-size:21px;font-weight:700;color:#9e1b20;">4</span>
<span class="t " style="left:1186.5px;top:1040px;line-height:18px;font-size:14.3px;color:#414141;letter-spacing:0.163px;">failed</span>
<span class="t b" style="left:1165px;top:1068px;line-height:25px;font-size:21px;font-weight:700;color:#858583;letter-spacing:-0.223px;">154</span>
<span class="t " style="left:1208.4px;top:1072px;line-height:18px;font-size:14.3px;color:#414141;letter-spacing:0.182px;">not applicable</span>
<span class="t b" style="left:1165px;top:1100px;line-height:25px;font-size:21px;font-weight:700;color:#2d2876;letter-spacing:-0.223px;">162</span>
<span class="t " style="left:1208.4px;top:1104px;line-height:18px;font-size:14.3px;color:#414141;letter-spacing:0.267px;">total</span>
<span class="t " style="left:1121px;top:1145px;line-height:20px;font-size:16.3px;color:#2d2876;letter-spacing:0.122px;">View full checklist</span>
<svg class="i" style="left:1258px;top:1149px" width="14.5" height="12" viewBox="0 0 14.5 12" ><g transform="translate(0.80 0.50)"><path d="M1 6H13.3M8.7 1.200L13.5 6L8.7 10.800" fill="none" stroke="#2d2876" stroke-width="1.7" stroke-linecap="round" stroke-linejoin="round"/></g></svg>
</main>
<div class="shade"></div>
</div>
</body></html>
